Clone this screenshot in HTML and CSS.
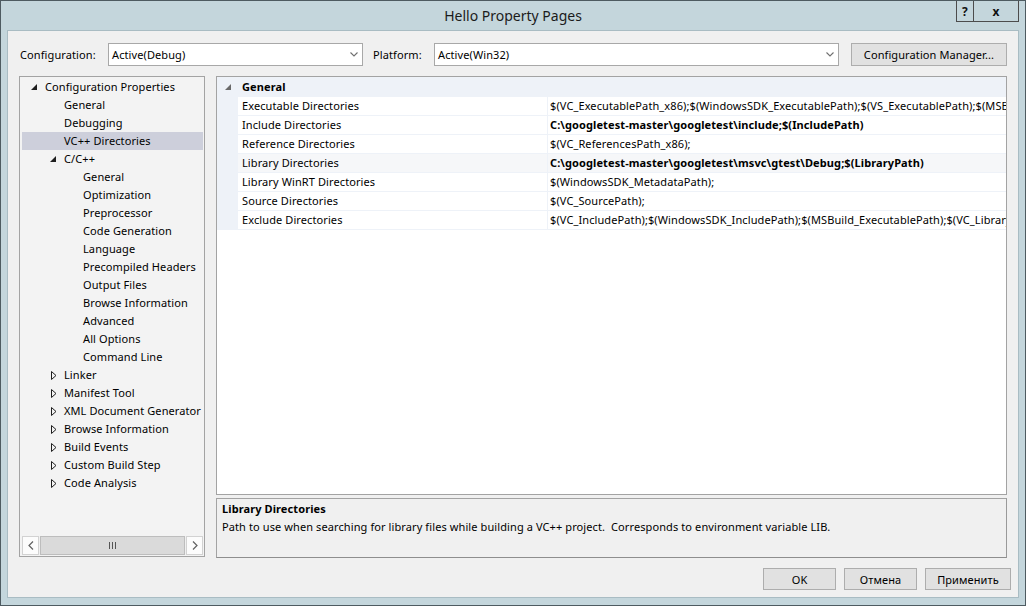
FILE: index.html
```html
<!DOCTYPE html>
<html>
<head>
<meta charset="utf-8">
<title>Hello Property Pages</title>
<link rel="stylesheet" href="styles.css">
</head>
<body>
<div class="window">
  <div class="titlebar">
    <div></div>
    <div class="title">Hello Property Pages</div>
    <div class="caption-btns"><span class="cbtn help">?</span><span class="cbtn close">x</span></div>
  </div>
  <div class="client">
    <div class="config-row">
      <span class="lbl lbl-config">Configuration:</span>
      <div class="combo combo-config"><span>Active(Debug)</span><svg class="chev" width="8" height="5" viewBox="0 0 8 5"><polyline points="0.5,0.5 4,4 7.5,0.5" fill="none" stroke="#707070" stroke-width="1.1"/></svg></div>
      <span class="lbl lbl-platform">Platform:</span>
      <div class="combo combo-platform"><span>Active(Win32)</span><svg class="chev" width="8" height="5" viewBox="0 0 8 5"><polyline points="0.5,0.5 4,4 7.5,0.5" fill="none" stroke="#707070" stroke-width="1.1"/></svg></div>
      <button class="btn btn-cm">Configuration Manager...</button>
    </div>
    <div class="main">
      <div class="tree">
        <ul class="tree-list">
          <li class="node l0"><span class="tog"><svg width="6" height="6" viewBox="0 0 6 6"><polygon points="6,0 6,6 0,6" fill="#1e1e1e"/></svg></span>Configuration Properties</li>
          <li class="node l1"><span class="tog"></span>General</li>
          <li class="node l1"><span class="tog"></span>Debugging</li>
          <li class="node l1 sel"><span class="tog"></span>VC++ Directories</li>
          <li class="node l1"><span class="tog"><svg width="6" height="6" viewBox="0 0 6 6"><polygon points="6,0 6,6 0,6" fill="#1e1e1e"/></svg></span>C/C++</li>
          <li class="node l2"><span class="tog"></span>General</li>
          <li class="node l2"><span class="tog"></span>Optimization</li>
          <li class="node l2"><span class="tog"></span>Preprocessor</li>
          <li class="node l2"><span class="tog"></span>Code Generation</li>
          <li class="node l2"><span class="tog"></span>Language</li>
          <li class="node l2"><span class="tog"></span>Precompiled Headers</li>
          <li class="node l2"><span class="tog"></span>Output Files</li>
          <li class="node l2"><span class="tog"></span>Browse Information</li>
          <li class="node l2"><span class="tog"></span>Advanced</li>
          <li class="node l2"><span class="tog"></span>All Options</li>
          <li class="node l2"><span class="tog"></span>Command Line</li>
          <li class="node l1"><span class="tog"><svg class="col" width="6" height="9" viewBox="0 0 6 9"><polygon points="0.5,0.5 5,4.5 0.5,8.5" fill="none" stroke="#1e1e1e"/></svg></span>Linker</li>
          <li class="node l1"><span class="tog"><svg class="col" width="6" height="9" viewBox="0 0 6 9"><polygon points="0.5,0.5 5,4.5 0.5,8.5" fill="none" stroke="#1e1e1e"/></svg></span>Manifest Tool</li>
          <li class="node l1"><span class="tog"><svg class="col" width="6" height="9" viewBox="0 0 6 9"><polygon points="0.5,0.5 5,4.5 0.5,8.5" fill="none" stroke="#1e1e1e"/></svg></span>XML Document Generator</li>
          <li class="node l1"><span class="tog"><svg class="col" width="6" height="9" viewBox="0 0 6 9"><polygon points="0.5,0.5 5,4.5 0.5,8.5" fill="none" stroke="#1e1e1e"/></svg></span>Browse Information</li>
          <li class="node l1"><span class="tog"><svg class="col" width="6" height="9" viewBox="0 0 6 9"><polygon points="0.5,0.5 5,4.5 0.5,8.5" fill="none" stroke="#1e1e1e"/></svg></span>Build Events</li>
          <li class="node l1"><span class="tog"><svg class="col" width="6" height="9" viewBox="0 0 6 9"><polygon points="0.5,0.5 5,4.5 0.5,8.5" fill="none" stroke="#1e1e1e"/></svg></span>Custom Build Step</li>
          <li class="node l1"><span class="tog"><svg class="col" width="6" height="9" viewBox="0 0 6 9"><polygon points="0.5,0.5 5,4.5 0.5,8.5" fill="none" stroke="#1e1e1e"/></svg></span>Code Analysis</li>
        </ul>
        <div class="hscroll">
          <span class="sbtn"><svg width="6" height="9" viewBox="0 0 6 9"><polyline points="5,0.5 1,4.5 5,8.5" fill="none" stroke="#606060" stroke-width="1.2"/></svg></span>
          <span class="thumb"><span class="grip"></span><span class="grip"></span><span class="grip"></span></span>
          <span class="sbtn"><svg width="6" height="9" viewBox="0 0 6 9"><polyline points="1,0.5 5,4.5 1,8.5" fill="none" stroke="#606060" stroke-width="1.2"/></svg></span>
        </div>
      </div>
      <div class="right">
        <div class="grid">
          <div class="section">
            <div class="grow ghead"><span class="gutter"><svg width="6" height="6" viewBox="0 0 6 6"><polygon points="6,0 6,6 0,6" fill="#6a6a6a"/></svg></span><span class="gname">General</span></div>
            <div class="grow"><span class="gutter"></span><span class="gname">Executable Directories</span><span class="gval">$(VC_ExecutablePath_x86);$(WindowsSDK_ExecutablePath);$(VS_ExecutablePath);$(MSBuild_ExecutablePath);$(FxCopDir);$(PATH);</span></div>
            <div class="grow"><span class="gutter"></span><span class="gname">Include Directories</span><span class="gval b">C:\googletest-master\googletest\include;$(IncludePath)</span></div>
            <div class="grow"><span class="gutter"></span><span class="gname">Reference Directories</span><span class="gval">$(VC_ReferencesPath_x86);</span></div>
            <div class="grow cur"><span class="gutter"></span><span class="gname">Library Directories</span><span class="gval b">C:\googletest-master\googletest\msvc\gtest\Debug;$(LibraryPath)</span></div>
            <div class="grow"><span class="gutter"></span><span class="gname">Library WinRT Directories</span><span class="gval">$(WindowsSDK_MetadataPath);</span></div>
            <div class="grow"><span class="gutter"></span><span class="gname">Source Directories</span><span class="gval">$(VC_SourcePath);</span></div>
            <div class="grow"><span class="gutter"></span><span class="gname">Exclude Directories</span><span class="gval">$(VC_IncludePath);$(WindowsSDK_IncludePath);$(MSBuild_ExecutablePath);$(VC_LibraryPath_x86);</span></div>
          </div>
        </div>
        <div class="desc">
          <div class="desc-title">Library Directories</div>
          <div class="desc-text">Path to use when searching for library files while building a VC++ project.  Corresponds to environment variable LIB.</div>
        </div>
      </div>
    </div>
    <div class="buttons">
      <button class="btn btn-ok">OK</button>
      <button class="btn btn-cancel">Отмена</button>
      <button class="btn btn-apply">Применить</button>
    </div>
  </div>
</div>
</body>
</html>
```
FILE: styles.css
```css
* { box-sizing: border-box; }
html, body { margin: 0; padding: 0; }
body {
  font-family: "Noto Sans", "DejaVu Sans", sans-serif;
  font-size: 11px;
  letter-spacing: 0.1px;
  color: #000;
  background: #fff;
}
.window {
  width: 1026px;
  height: 606px;
  border: 1px solid #4e5b61;
  background: #c4d6dc;
  display: flex;
  flex-direction: column;
  padding: 0 6px 7px 6px;
}
.titlebar {
  height: 29px;
  display: grid;
  grid-template-columns: 1fr auto 1fr;
  align-items: start;
}
.title {
  font-size: 14px;
  letter-spacing: 0;
  line-height: 29px;
  color: #1b1b1b;
}
.caption-btns {
  justify-self: end;
  display: flex;
  border: 1px solid #4c4c4c;
  border-top: none;
  height: 21px;
}
.cbtn {
  height: 20px;
  display: flex;
  align-items: center;
  justify-content: center;
  font-weight: bold;
  font-size: 12px;
  color: #111;
}
.help { width: 17px; border-right: 1px solid #4c4c4c; }
.close { width: 44px; }

.client {
  flex: 1;
  background: #f0f0f0;
  border: 1px solid #a9bcc3;
  display: flex;
  flex-direction: column;
  padding: 12px 11px 0 11px;
}
.config-row {
  display: flex;
  align-items: center;
  height: 23px;
}
.lbl { white-space: nowrap; }
.lbl-config { width: 89px; padding-left: 1px; }
.lbl-platform { width: 61px; margin-left: 10px; }
.combo {
  height: 23px;
  background: #fff;
  border: 1px solid #a8a8a8;
  display: flex;
  align-items: center;
  justify-content: space-between;
  padding: 0 4px 0 3px;
}
.combo-config { width: 255px; }
.combo-platform { width: 405px; }
.chev { display: block; }
.btn {
  font-family: inherit;
  font-size: 11px;
  letter-spacing: 0.1px;
  color: #000;
  background: #e1e1e1;
  border: 1px solid #adadad;
  padding: 0;
  display: flex;
  align-items: center;
  justify-content: center;
}
.btn-cm { width: 156px; height: 23px; margin-left: 12px; }

.main {
  display: flex;
  align-items: flex-start;
  gap: 11px;
  margin-top: 10px;
  height: 482px;
}
.tree {
  width: 186px;
  height: 481px;
  border: 1px solid #a3a3a3;
  background: #f3f3f3;
  padding: 1px;
  display: flex;
  flex-direction: column;
}
.tree-list {
  list-style: none;
  margin: 0;
  padding: 0;
  flex: 1;
  overflow: hidden;
}
.node {
  height: 18px;
  line-height: 18px;
  display: flex;
  align-items: center;
  white-space: nowrap;
}
.node.l0 { padding-left: 8px; }
.node.l1 { padding-left: 27px; }
.node.l2 { padding-left: 46px; }
.node.sel { background: #cdcfdb; margin-left: 1px; padding-left: 26px; }
.tog {
  width: 16px;
  flex: none;
  display: flex;
  align-items: center;
}
.tog svg { display: block; margin-left: 2px; }
.tog svg.col { margin-left: 3px; }

.hscroll {
  height: 19px;
  margin-left: 1px;
  display: flex;
  align-items: stretch;
  background: #f0f0f0;
}
.sbtn {
  width: 17px;
  background: #fcfcfc;
  border: 1px solid #d2d2d2;
  display: flex;
  align-items: center;
  justify-content: center;
}
.thumb {
  flex: 1;
  margin: 0 1px;
  background: #dadada;
  border: 1px solid #bdbdbd;
  display: flex;
  align-items: center;
  justify-content: center;
  gap: 2px;
}
.grip { width: 1px; height: 7px; background: #555; }

.right {
  width: 791px;
  display: flex;
  flex-direction: column;
  gap: 3px;
}
.grid {
  height: 419px;
  background: #fff;
  border: 1px solid #a3a3a3;
  overflow: hidden;
}
.section {
  background: #eef2f8;
  padding-top: 1px;
}
.grow {
  display: flex;
  height: 19px;
  line-height: 18px;
  padding-bottom: 1px;
  white-space: nowrap;
}
.gutter {
  width: 21px;
  flex: none;
  display: flex;
  align-items: center;
  justify-content: center;
}
.gutter svg { display: block; margin-left: 1px; }
.gname {
  width: 310px;
  flex: none;
  padding-left: 4px;
  background: #fff;
  border-right: 1px solid #eef2f8;
}
.gval {
  flex: 1;
  padding-left: 2px;
  background: #fff;
  overflow: hidden;
}
.ghead .gname { background: transparent; border-right: none; font-weight: bold; }
.grow.cur .gname, .grow.cur .gval { background: #f6f7f9; }
.b { font-weight: bold; }

.desc {
  height: 60px;
  border: 1px solid #a3a3a3;
  border-bottom-color: #8e8e8e;
  border-right-color: #9a9a9a;
  background: #f0f0f0;
  padding: 1px 5px 0 5px;
  line-height: 18px;
}
.desc-title { font-weight: bold; }
.desc-text { white-space: pre; }

.buttons {
  display: flex;
  justify-content: flex-end;
  gap: 8px;
  margin-top: 10px;
  margin-right: -4px;
}
.buttons .btn { height: 22px; }
.btn-ok { width: 73px; }
.btn-cancel { width: 73px; }
.btn-apply { width: 86px; }
```
